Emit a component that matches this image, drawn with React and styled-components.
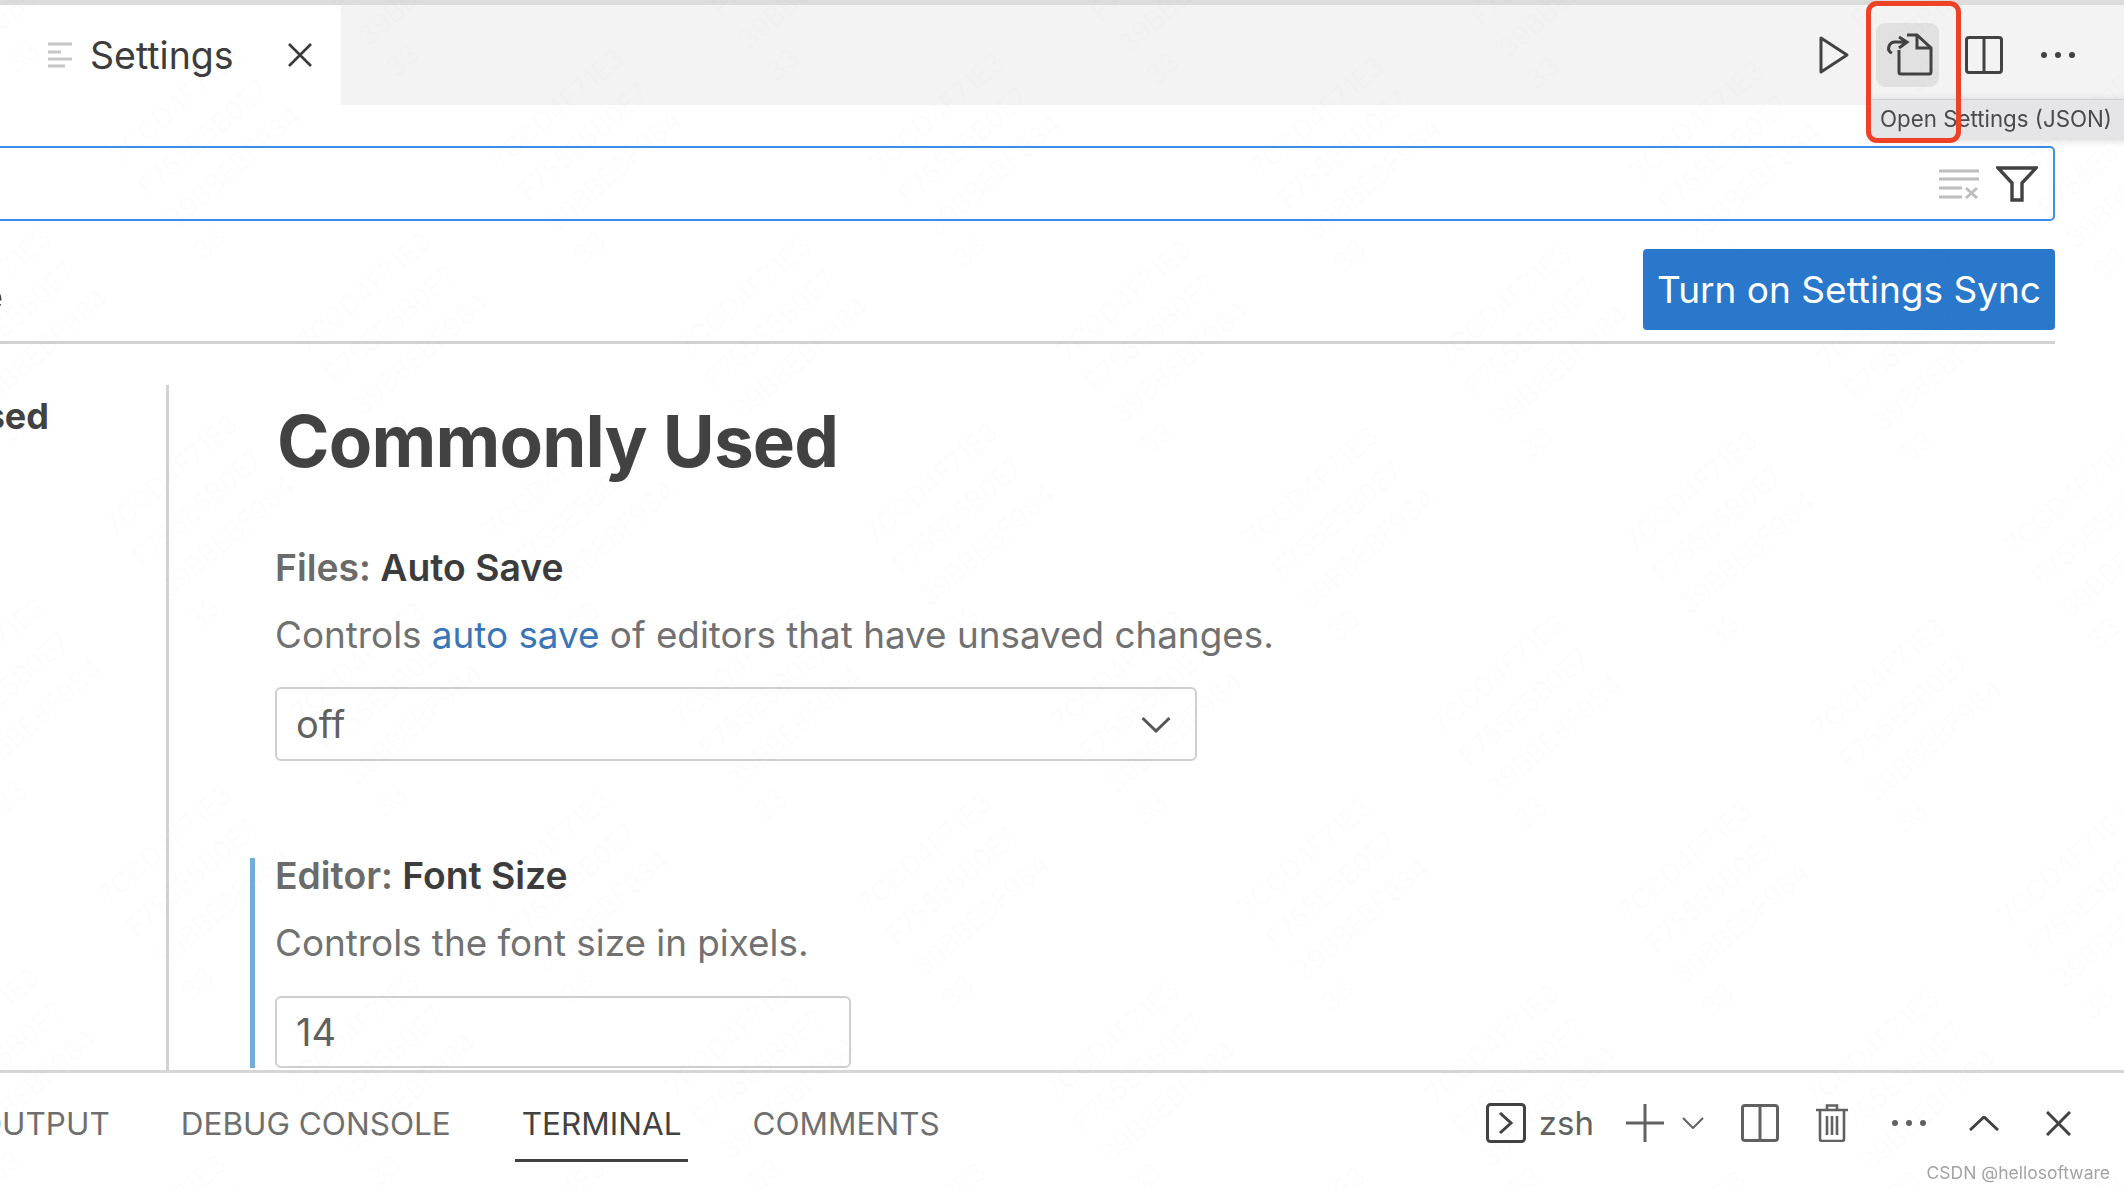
import React from "react";
import styled, { createGlobalStyle } from "styled-components";

const Global = createGlobalStyle`
  html, body { margin: 0; padding: 0; background: #fff; }
  #root { width: 2124px; height: 1190px; }
  * { box-sizing: border-box; }
`;

const Page = styled.div`
  position: relative;
  width: 2124px;
  height: 1190px;
  overflow: hidden;
  display: flex;
  flex-direction: column;
  background: #fff;
  font-family: Inter, "Liberation Sans", sans-serif;
  color: #717171;
`;
const TopEdge = styled.div`
  height: 5px;
  flex: none;
  background: #dcdcdc;
`;
const TabStrip = styled.div`
  height: 100px;
  flex: none;
  display: flex;
  align-items: stretch;
  justify-content: space-between;
  background: #f3f3f3;
`;
const EditorTab = styled.div`
  width: 341px;
  background: #fff;
  display: flex;
  align-items: center;
  padding: 0 0 0 48px;
  font-size: 37.5px;
  color: #3c3c3c;
`;
const TabTitle = styled.span`
  margin-left: 18px;
  width: 198px;
`;
const Actions = styled.div`
  display: flex;
  align-items: center;
  padding-right: 48px;
`;
const HoverButton = styled.div`
  width: 63px;
  height: 64px;
  margin: 0 26px 0 27px;
  border-radius: 9px;
  background: #e1e1e1;
  display: flex;
  align-items: center;
  justify-content: center;
`;
const Glyph = styled.svg`
  flex: none;
  display: block;
  margin-left: ${(p) => p.$ml || 0}px;
  margin-top: ${(p) => p.$mt || 0}px;
  fill: none;
  stroke: ${(p) => p.$stroke || "#424242"};
  stroke-width: ${(p) => p.$sw || 3};
`;
const SearchBox = styled.div`
  width: 2059px;
  height: 75px;
  margin: 41px 0 0 -4px;
  flex: none;
  border: 2px solid #3b8eea;
  border-radius: 5px;
  display: flex;
  align-items: center;
  justify-content: flex-end;
  padding-right: 15px;
  gap: 17px;
`;
const HeaderRow = styled.div`
  width: 2055px;
  height: 123px;
  flex: none;
  border-bottom: 3px solid #d2d2d2;
  display: flex;
  justify-content: space-between;
  align-items: flex-start;
  padding-top: 28px;
`;
const ClippedScope = styled.div`
  width: 3px;
  overflow: hidden;
  display: flex;
  justify-content: flex-end;
  margin-top: 28px;
  font-size: 34px;
  line-height: 40px;
  color: #3c3c3c;
  will-change: transform;
`;
const SyncButton = styled.div`
  width: 412px;
  height: 81px;
  background: #2a78cc;
  border-radius: 4px;
  color: #fff;
  font-size: 37px;
  display: flex;
  align-items: center;
  justify-content: center;
`;
const Body = styled.div`
  flex: 1;
  min-height: 0;
  display: flex;
  overflow: hidden;
`;
const Sidebar = styled.div`
  width: 169px;
  flex: none;
  margin-top: 41px;
  border-right: 3px solid #d2d2d2;
`;
const SidebarItem = styled.div`
  width: 49px;
  overflow: hidden;
  display: flex;
  justify-content: flex-end;
  white-space: nowrap;
  font-size: 36px;
  font-weight: 700;
  line-height: 44px;
  margin-top: 9px;
  color: #424242;
`;
const Content = styled.div`
  flex: 1;
  padding-left: 81px;
`;
const Heading = styled.h1`
  margin: 54px 0 66px 27px;
  font-size: 71px;
  line-height: 86px;
  font-weight: 700;
  letter-spacing: -0.8px;
  color: #424242;
`;
const Group = styled.div`
  border-left: 5px solid ${(p) => (p.$modified ? "#6fadde" : "transparent")};
  padding-left: 20px;
  margin-bottom: 97px;
`;
const SettingTitle = styled.div`
  font-size: 37.3px;
  line-height: 36px;
  font-weight: 600;
  color: #6b6b6b;
`;
const SettingName = styled.span`
  color: #3c3c3c;
`;
const Description = styled.div`
  margin-top: 24px;
  font-size: 36.85px;
  line-height: 50px;
  color: #717171;
`;
const DocLink = styled.span`
  color: #3a75b8;
`;
const Field = styled.div`
  width: ${(p) => p.$w}px;
  height: ${(p) => p.$h}px;
  margin-top: ${(p) => p.$mt}px;
  border: 2px solid #cfcfcf;
  border-radius: 6px;
  padding: 0 24px 0 19px;
  display: flex;
  align-items: center;
  justify-content: space-between;
  font-size: 38px;
  color: #616161;
`;
const Panel = styled.div`
  height: 120px;
  flex: none;
  border-top: 3px solid #d6d6d6;
  margin-top: -1px;
  display: flex;
  align-items: flex-start;
  justify-content: space-between;
  background: #fff;
`;
const PanelTabs = styled.div`
  display: flex;
  gap: 57px;
  margin-left: -29px;
  padding-top: 28px;
`;
const PanelTab = styled.div`
  padding: 0 7px 12px;
  line-height: 46px;
  font-size: 31.5px;
  white-space: nowrap;
  color: ${(p) => (p.$active ? "#424242" : "#6f6f6f")};
  border-bottom: 3px solid ${(p) => (p.$active ? "#424242" : "transparent")};
`;
const PanelActions = styled.div`
  display: flex;
  align-items: center;
  height: 62px;
  margin-top: 19px;
  padding-right: 53px;
`;
const ShellName = styled.span`
  margin-left: 13px;
  margin-right: 32px;
  font-size: 33px;
  color: #616161;
`;
const Tooltip = styled.div`
  position: absolute;
  left: 1872px;
  top: 99px;
  width: 262px;
  height: 39px;
  padding-left: 8px;
  background: #e5e5e7;
  border-top: 1px solid #d0d0d0;
  box-shadow: 0 2px 8px rgba(0, 0, 0, 0.18);
  font-size: 22.3px;
  line-height: 38px;
  color: #4a4a4a;
  white-space: nowrap;
`;
const RedFrame = styled.div`
  position: absolute;
  left: 1866px;
  top: 1px;
  width: 95px;
  height: 142px;
  border: 5px solid #ee4226;
  border-radius: 11px;
`;
const Credit = styled.div`
  position: absolute;
  right: 14px;
  bottom: 5px;
  font-size: 17.5px;
  line-height: 24px;
  color: #a3a3a3;
`;
const WatermarkLayer = styled.div`
  position: absolute;
  inset: 0;
  overflow: hidden;
  pointer-events: none;
`;
const WatermarkTile = styled.div`
  position: absolute;
  transform-origin: 0 0;
  transform: rotate(-41deg);
  font-size: 27px;
  line-height: 42px;
  white-space: pre;
  color: rgba(0, 0, 0, 0.013);
`;

const tiles = [];
for (let i = -8; i <= 8; i++) {
  for (let j = -8; j <= 8; j++) {
    const x = 1235 + i * 187 + j * 193;
    const y = 526 + i * 187 - j * 183;
    if (x > -350 && x < 2200 && y > -100 && y < 1450) tiles.push({ x, y });
  }
}

const Watermark = () => (
  <WatermarkLayer>
    {tiles.map((t, n) => (
      <WatermarkTile key={n} style={{ left: t.x, top: t.y }}>
        {"7CCD4F71E3\nF755E5B0E7\n39BBEBF984\n33"}
      </WatermarkTile>
    ))}
  </WatermarkLayer>
);

const SplitIcon = ({ ml, size = 38, sw = 3, stroke }) => (
  <Glyph width={size} height={size} viewBox="0 0 38 38" $ml={ml} $sw={sw} $stroke={stroke}>
    <rect x="1.5" y="1.5" width="35" height="35" rx="2.5" />
    <path d="M19 1.5V36.5" />
  </Glyph>
);

const Dots = ({ ml, color = "#424242", r = 3 }) => (
  <Glyph width="36" height="10" viewBox="0 0 36 10" $ml={ml} $stroke="none">
    <circle cx="4" cy="5" r={r} fill={color} />
    <circle cx="18" cy="5" r={r} fill={color} />
    <circle cx="32" cy="5" r={r} fill={color} />
  </Glyph>
);

export default function App() {
  return (
    <Page>
      <Global />
      <TopEdge />
      <TabStrip>
        <EditorTab>
          <Glyph width="24" height="26" viewBox="0 0 24 26" $stroke="#c6c6c6" $sw={2.8}>
            <path d="M0 2H24M0 10H13M0 17H24M0 24H17" />
          </Glyph>
          <TabTitle>Settings</TabTitle>
          <Glyph width="24" height="24" viewBox="0 0 24 24" $stroke="#3a3a3a" $sw={2.6}>
            <path d="M1 1L23 23M23 1L1 23" />
          </Glyph>
        </EditorTab>
        <Actions>
          <Glyph width="30" height="38" viewBox="0 0 30 38" $sw={3}>
            <path d="M2 2V36L28 19Z" strokeLinejoin="round" />
          </Glyph>
          <HoverButton>
            <Glyph width="50" height="50" viewBox="0 0 50 50" $sw={3}>
              <path d="M24 5H34L48 18V42A2 2 0 0 1 46 44H18A2 2 0 0 1 16 42V20" />
              <path d="M34 5V18H48" />
              <path d="M16 7L24 12L16 18M24 12H12C6 12 4 19 7 22L9 23" />
            </Glyph>
          </HoverButton>
          <SplitIcon />
          <Dots ml={37} />
        </Actions>
      </TabStrip>
      <SearchBox>
        <Glyph width="40" height="30" viewBox="0 0 40 30" $stroke="#bdbdbd" $sw={3}>
          <path d="M0 2H40M0 10H40M0 19H23M0 28H23M27 19L38 29M38 19L27 29" />
        </Glyph>
        <Glyph width="42" height="36" viewBox="0 0 42 36" $sw={3.4}>
          <path d="M2 2H40L26 17V34H16V17Z" strokeLinejoin="miter" />
        </Glyph>
      </SearchBox>
      <HeaderRow>
        <ClippedScope>Workspace</ClippedScope>
        <SyncButton>Turn on Settings Sync</SyncButton>
      </HeaderRow>
      <Body>
        <Sidebar>
          <SidebarItem>Commonly Used</SidebarItem>
        </Sidebar>
        <Content>
          <Heading>Commonly Used</Heading>
          <Group>
            <SettingTitle>
              Files: <SettingName>Auto Save</SettingName>
            </SettingTitle>
            <Description>
              Controls <DocLink>auto save</DocLink> of editors that have unsaved changes.
            </Description>
            <Field $w={922} $h={74} $mt={27}>
              off
              <Glyph width="30" height="17" viewBox="0 0 30 17" $stroke="#555" $sw={3}>
                <path d="M1.5 2L15 15L28.5 2" />
              </Glyph>
            </Field>
          </Group>
          <Group $modified>
            <SettingTitle>
              Editor: <SettingName>Font Size</SettingName>
            </SettingTitle>
            <Description>Controls the font size in pixels.</Description>
            <Field $w={576} $h={72} $mt={28}>
              14
            </Field>
          </Group>
        </Content>
      </Body>
      <Panel>
        <PanelTabs>
          <PanelTab>OUTPUT</PanelTab>
          <PanelTab>DEBUG CONSOLE</PanelTab>
          <PanelTab $active>TERMINAL</PanelTab>
          <PanelTab>COMMENTS</PanelTab>
        </PanelTabs>
        <PanelActions>
          <Glyph width="40" height="40" viewBox="0 0 40 40" $stroke="#424242" $sw={3}>
            <rect x="1.5" y="1.5" width="37" height="37" rx="3" />
            <path d="M14 10L25 20L14 30" />
          </Glyph>
          <ShellName>zsh</ShellName>
          <Glyph width="38" height="38" viewBox="0 0 38 38" $stroke="#616161" $sw={3}>
            <path d="M19 0V38M0 19H38" />
          </Glyph>
          <Glyph width="22" height="12" viewBox="0 0 22 12" $ml={18} $stroke="#616161" $sw={2}>
            <path d="M1 1L11 11L21 1" />
          </Glyph>
          <SplitIcon ml={37} stroke="#616161" />
          <Glyph width="32" height="38" viewBox="0 0 32 38" $ml={37} $stroke="#616161" $sw={2.6}>
            <path d="M0 6H32M11 6V1.5H21V6M4 6V35A2 2 0 0 0 6 37H26A2 2 0 0 0 28 35V6M11 12V31M16 12V31M21 12V31" />
          </Glyph>
          <Dots ml={43} color="#616161" />
          <Glyph width="30" height="15" viewBox="0 0 30 15" $ml={42} $stroke="#424242" $sw={3}>
            <path d="M1 14L15 1L29 14" />
          </Glyph>
          <Glyph width="25" height="25" viewBox="0 0 25 25" $ml={47} $stroke="#424242" $sw={3}>
            <path d="M1 1L24 24M24 1L1 24" />
          </Glyph>
        </PanelActions>
      </Panel>
      <Watermark />
      <Tooltip>Open Settings (JSON)</Tooltip>
      <RedFrame />
      <Credit>CSDN @hellosoftware</Credit>
    </Page>
  );
}
